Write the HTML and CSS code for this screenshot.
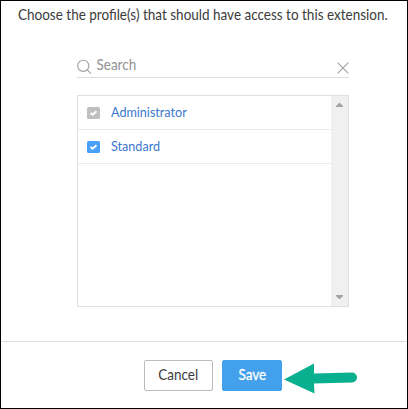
FILE: index.html
```
<!DOCTYPE html>
<html lang="en">

<head>
    <meta charset="UTF-8">
    <meta name="viewport" content="width=device-width, initial-scale=1.0">
    <title>Choose profiles</title>
    <link rel="stylesheet" href="styles.css">
</head>

<body>

    <div class="dialog">
        <div class="dialog__body">
            <p class="dialog__title">Choose the profile(s) that should have access to this extension.</p>

            <div class="search">
                <svg class="search__icon" width="15" height="16" viewBox="0 0 15 16">
                    <circle cx="6.3" cy="6.8" r="5.6" />
                    <path d="M10.3 10.8L14 14.6" />
                </svg>
                <input class="search__input" type="text" placeholder="Search">
                <svg class="search__clear" width="12" height="12" viewBox="0 0 12 12">
                    <path d="M0.7 0.7L11.3 11.3M11.3 0.7L0.7 11.3" />
                </svg>
            </div>

            <div class="profiles">
                <div class="profiles__list">
                    <div class="profile">
                        <svg class="profile__check profile__check--disabled" width="13" height="12" viewBox="0 0 13 12">
                            <rect width="13" height="12" rx="1.5" />
                            <path d="M3.5 6.1L5.6 7.8L9.5 4.3" />
                        </svg>
                        <span class="profile__name">Administrator</span>
                    </div>
                    <div class="profile">
                        <svg class="profile__check" width="13" height="12" viewBox="0 0 13 12">
                            <rect width="13" height="12" rx="1.5" />
                            <path d="M3.5 6.1L5.6 7.8L9.5 4.3" />
                        </svg>
                        <span class="profile__name">Standard</span>
                    </div>
                </div>
                <div class="profiles__scrollbar">
                    <svg width="7" height="4" viewBox="0 0 7 4">
                        <path d="M0 4L0 3L3 0L4 0L7 3L7 4Z" />
                    </svg>
                    <svg width="7" height="4" viewBox="0 0 7 4">
                        <path d="M0 0L0 1L3 4L4 4L7 1L7 0Z" />
                    </svg>
                </div>
            </div>
        </div>

        <div class="dialog__footer">
            <button class="btn"><span class="btn__label">Cancel</span></button>
            <button class="btn btn--save"><span class="btn__label">Save</span></button>
            <svg class="arrow" width="74" height="32" viewBox="0 0 74 32">
                <path d="M0 16.5L30 0.5L30 10.5L68 9.5A5 5 0 0 1 68 19.5L30 20.5L30.5 30.5Z" />
            </svg>
        </div>
    </div>

</body>

</html>
```
FILE: styles.css
```
body {
    margin: 0;
    font-family: Lato, "Liberation Sans", sans-serif;
    font-size: 15px;
    color: #3c3c3c;
}

.dialog {
    width: 408px;
    height: 409px;
    box-sizing: border-box;
    border: 1px solid #000;
    background-color: #fff;
    display: flex;
    flex-direction: column;
}

.dialog__body {
    height: 340px;
    box-sizing: border-box;
    padding: 3px 0 0 76px;
}

.dialog__title {
    margin: 0 0 0 -59px;
    line-height: 20px;
    white-space: nowrap;
    transform: scaleX(.9);
    transform-origin: left;
}

.search {
    width: 272px;
    height: 27px;
    margin-top: 26px;
    border-bottom: 1px solid #ddd;
    display: flex;
    align-items: center;
}

.search svg {
    fill: none;
    stroke: #a0a0a0;
    stroke-width: 1.1;
    flex: none;
}

.search__icon {
    margin-top: 6px;
}

.search__input {
    flex: 1;
    min-width: 0;
    padding: 0 0 0 5px;
    border: 0;
    outline: 0;
    background: none;
    font: inherit;
    transform: scaleX(.9);
    transform-origin: left;
}

.search__input::placeholder {
    color: #929292;
}

.search__clear {
    margin-top: 9px;
}

.profiles {
    width: 272px;
    height: 212px;
    margin-top: 17px;
    box-sizing: border-box;
    border: 1px solid #e0e0e0;
    display: flex;
}

.profiles__list {
    flex: 1;
}

.profile {
    height: 34px;
    box-sizing: border-box;
    padding-left: 9px;
    border-bottom: 1px solid #ebebeb;
    display: flex;
    align-items: center;
    gap: 11px;
}

.profile__check {
    margin-top: 1px;
    fill: #4a9ff9;
}

.profile__check--disabled {
    fill: #bfbfbf;
}

.profile__check path {
    fill: none;
    stroke: #fff;
    stroke-width: 1.9;
}

.profile__name {
    margin-bottom: 3px;
    font-size: 14px;
    color: #3a78cf;
    transform: scaleX(.9);
    transform-origin: left;
}

.profiles__scrollbar {
    width: 17px;
    box-sizing: border-box;
    padding: 7px 0;
    background-color: #f0f0f0;
    display: flex;
    flex-direction: column;
    justify-content: space-between;
    align-items: center;
    fill: #a3a3a3;
}

.dialog__footer {
    flex: 1;
    border-top: 1px solid #ddd;
    padding: 18px 0 0 143px;
    display: flex;
    align-items: flex-start;
}

.btn {
    width: 69px;
    height: 31px;
    padding: 0 0 4px;
    border: 1px solid #bbb;
    border-radius: 2px;
    background-color: #fff;
    font: inherit;
    color: #3c3c3c;
}

.btn__label {
    display: inline-block;
    transform: scaleX(.9);
}

.btn--save {
    width: 60px;
    margin-left: 9px;
    border-color: #42a0ec;
    background-color: #42a0ec;
    color: #fff;
    -webkit-text-stroke: 0.3px #fff;
}

.arrow {
    margin: 3px 0 0 2px;
    fill: #09b08f;
}
```
